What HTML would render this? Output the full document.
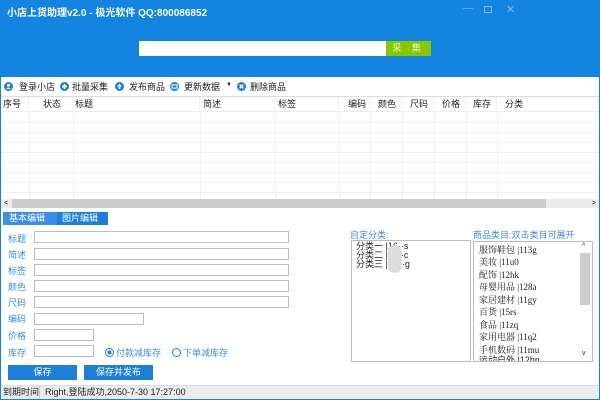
<html><head><style>
*{margin:0;padding:0;box-sizing:border-box}
body{width:600px;height:400px;position:relative;overflow:hidden;background:#fff;font-family:"Liberation Sans","Noto Sans CJK SC",sans-serif;font-size:9px;color:#222}
.a{position:absolute}
.in{position:absolute;border:1px solid #bdbdbd;background:#fff}
.lb{position:absolute;left:8px;color:#3a8ee6;font-size:9px}
.th{position:absolute;top:97px;height:14px;line-height:14px;font-size:9px;border-right:1px solid #eef2f8}
.vl{position:absolute;top:111px;height:88px;width:1px;background:#f0f0f0}
.hl{position:absolute;left:0;width:600px;height:1px;background:#f0f0f0}
.ic{position:absolute;top:82px;width:9px;height:9px}
.tb{position:absolute;top:80px;font-size:9px;color:#222}
.li{position:absolute;left:479px;font-family:"Liberation Serif","Noto Serif CJK SC",serif;font-size:9px;color:#222;white-space:nowrap}
</style></head><body>
<div class="a" style="left:0;top:0;width:600px;height:77px;background:#1384e0"></div>
<div class="a" style="left:7px;top:4px;color:#fff;font-weight:bold;font-size:10px">小店上货助理v2.0 - 极光软件 QQ:800086852</div>
<div class="a" style="left:463px;top:3px;color:#7fb8ee;font-size:10px">—</div>
<div class="a" style="left:484px;top:6px;width:8px;height:7px;border:1px solid #7fb8ee"></div>
<div class="a" style="left:506px;top:3px;color:#7fb8ee;font-size:11px">✕</div>
<div class="a" style="left:139px;top:41px;width:247px;height:15px;background:#fff"></div>
<div class="a" style="left:386px;top:41px;width:45px;height:15px;background:#88c800;color:#e8ffd0;text-align:center;line-height:15px;letter-spacing:4px">采 集</div>
<svg class="ic" style="left:4px" viewBox="0 0 11 11"><circle cx="5.5" cy="5.5" r="5.5" fill="#1e7fd8"/><circle cx="5.5" cy="4" r="1.8" fill="#fff"/><path d="M2.5 8.5Q5.5 5 8.5 8.5Z" fill="#fff"/></svg>
<div class="tb" style="left:19px">登录小店</div>
<svg class="ic" style="left:60px" viewBox="0 0 11 11"><circle cx="5.5" cy="5.5" r="5.5" fill="#1e7fd8"/><path d="M5.5 2.5V8.5M2.5 5.5H8.5" stroke="#fff" stroke-width="2"/></svg>
<div class="tb" style="left:72px">批量采集</div>
<svg class="ic" style="left:115px" viewBox="0 0 11 11"><circle cx="5.5" cy="5.5" r="5.5" fill="#1e7fd8"/><path d="M5.5 2L2.5 5.5H4.5V8.5H6.5V5.5H8.5Z" fill="#fff"/></svg>
<div class="tb" style="left:129px">发布商品</div>
<svg class="ic" style="left:170px" viewBox="0 0 11 11"><circle cx="5.5" cy="5.5" r="5.5" fill="#1e7fd8"/><rect x="2.5" y="3.5" width="6" height="4" fill="none" stroke="#fff" stroke-width="1.3"/></svg>
<div class="tb" style="left:184px">更新数据</div>
<div class="a" style="left:226px;top:82px;font-size:6px">▼</div>
<svg class="ic" style="left:237px" viewBox="0 0 11 11"><circle cx="5.5" cy="5.5" r="5.5" fill="#1e7fd8"/><path d="M3.3 3.3L7.7 7.7M7.7 3.3L3.3 7.7" stroke="#fff" stroke-width="1.8"/></svg>
<div class="tb" style="left:250px">删除商品</div>
<div class="a" style="left:0;top:96px;width:600px;height:1px;background:#ddd"></div>
<div class="th" style="left:0;width:29px;padding-left:3px">序号</div>
<div class="th" style="left:29px;width:44px;padding-left:14px">状态</div>
<div class="th" style="left:73px;width:127px;padding-left:2px">标题</div>
<div class="th" style="left:200px;width:75px;padding-left:3px">简述</div>
<div class="th" style="left:275px;width:64px;padding-left:3px">标签</div>
<div class="th" style="left:339px;width:31px;padding-left:9px">编码</div>
<div class="th" style="left:370px;width:32px;padding-left:8px">颜色</div>
<div class="th" style="left:402px;width:32px;padding-left:8px">尺码</div>
<div class="th" style="left:434px;width:32px;padding-left:8px">价格</div>
<div class="th" style="left:466px;width:31px;padding-left:7px">库存</div>
<div class="th" style="left:497px;width:103px;padding-left:8px;border:0">分类</div>
<div class="hl" style="top:111px;background:#e8eef6"></div>
<div class="hl" style="top:122px"></div><div class="hl" style="top:132px"></div><div class="hl" style="top:142px"></div><div class="hl" style="top:152px"></div><div class="hl" style="top:162px"></div><div class="hl" style="top:172px"></div><div class="hl" style="top:182px"></div><div class="hl" style="top:192px"></div>
<div class="vl" style="left:29px"></div><div class="vl" style="left:73px"></div><div class="vl" style="left:200px"></div><div class="vl" style="left:275px"></div><div class="vl" style="left:339px"></div><div class="vl" style="left:370px"></div><div class="vl" style="left:402px"></div><div class="vl" style="left:434px"></div><div class="vl" style="left:466px"></div><div class="vl" style="left:497px"></div>
<div class="a" style="left:0;top:199px;width:600px;height:9px;background:#cdcdcd"></div>
<div class="a" style="left:0;top:199px;width:12px;height:9px;background:#ececec;font-size:7px;line-height:9px;text-align:center">&lt;</div>
<div class="a" style="left:546px;top:199px;width:54px;height:9px;background:#ececec;font-size:7px;line-height:9px;text-align:right;padding-right:4px">&gt;</div>
<div class="a" style="left:3px;top:212px;width:54px;height:13px;background:#3a8ee6;color:#fff;line-height:13px;padding-left:6px">基本编辑</div>
<div class="a" style="left:57px;top:212px;width:51px;height:13px;background:#1e7fd8;color:#fff;line-height:13px;padding-left:5px">图片编辑</div>
<div class="lb" style="top:232px">标题</div><div class="in" style="left:34px;top:231px;width:255px;height:12px"></div>
<div class="lb" style="top:248px">简述</div><div class="in" style="left:34px;top:248px;width:255px;height:12px"></div>
<div class="lb" style="top:264px">标签</div><div class="in" style="left:34px;top:264px;width:255px;height:12px"></div>
<div class="lb" style="top:280px">颜色</div><div class="in" style="left:34px;top:280px;width:255px;height:12px"></div>
<div class="lb" style="top:296px">尺码</div><div class="in" style="left:34px;top:296px;width:255px;height:12px"></div>
<div class="lb" style="top:312px">编码</div><div class="in" style="left:34px;top:313px;width:110px;height:12px"></div>
<div class="lb" style="top:329px">价格</div><div class="in" style="left:34px;top:329px;width:60px;height:12px"></div>
<div class="lb" style="top:346px">库存</div><div class="in" style="left:34px;top:345px;width:60px;height:12px"></div>
<div class="a" style="left:105px;top:348px;width:9px;height:9px;border-radius:50%;border:1px solid #1e7fd8;background:radial-gradient(#1e7fd8 40%,#fff 45%)"></div>
<div class="a" style="left:116px;top:346px;color:#3a8ee6">付款减库存</div>
<div class="a" style="left:172px;top:348px;width:9px;height:9px;border-radius:50%;border:1px solid #1e7fd8"></div>
<div class="a" style="left:183px;top:346px;color:#3a8ee6">下单减库存</div>
<div class="a" style="left:8px;top:365px;width:69px;height:15px;background:#1e7fd8;color:#fff;text-align:center;line-height:15px">保存</div>
<div class="a" style="left:84px;top:365px;width:69px;height:15px;background:#1e7fd8;color:#fff;text-align:center;line-height:15px">保存并发布</div>
<div class="a" style="left:350px;top:228px;color:#3a8ee6">自定分类:</div>
<div class="a" style="left:473px;top:228px;color:#3a8ee6">商品类目:双击类目可展开</div>
<div class="in" style="left:351px;top:240px;width:120px;height:122px"></div>
<div class="a" style="left:356px;top:242px;line-height:9px;font-size:9px;white-space:nowrap">分类一 |16··s<br>分类二 |16··c<br>分类三 |1····g</div>
<div class="a" style="left:388px;top:245px;width:14px;height:28px;border-radius:7px;background:#ddd"></div>
<div class="in" style="left:473px;top:241px;width:120px;height:121px"></div>
<div class="a" style="left:580px;top:253px;width:10px;height:52px;background:#cdcdcd"></div>
<div class="a" style="left:582px;top:243px;font-size:7px">^</div>
<div class="a" style="left:582px;top:350px;font-size:7px">v</div>
<div class="li" style="top:243px">服饰鞋包 |113g</div>
<div class="li" style="top:255px">美妆 |11u0</div>
<div class="li" style="top:268px">配饰 |12hk</div>
<div class="li" style="top:280px">母婴用品 |128a</div>
<div class="li" style="top:293px">家居建材 |11gy</div>
<div class="li" style="top:305px">百货 |15rs</div>
<div class="li" style="top:318px">食品 |11zq</div>
<div class="li" style="top:330px">家用电器 |11q2</div>
<div class="li" style="top:343px">手机数码 |11mu</div>
<div class="a" style="left:479px;top:355px;width:60px;height:6px;overflow:hidden;font-size:9px;line-height:11px;white-space:nowrap">运动户外 |12hm</div>
<div class="a" style="left:0;top:385px;width:600px;height:15px;background:#ececec;border-top:1px solid #ddd"></div>
<div class="a" style="left:0;top:386px;width:40px;height:13px;border-right:1px solid #ccc;line-height:13px;padding-left:3px">到期时间</div>
<div class="a" style="left:45px;top:386px;line-height:13px">Right,登陆成功,2050-7-30 17:27:00</div>
<div class="a" style="left:0;top:399px;width:600px;height:1px;background:#1384e0"></div>
<div class="a" style="left:599px;top:77px;width:1px;height:323px;background:#1384e0"></div>
<div class="a" style="left:0;top:77px;width:1px;height:323px;background:#1384e0"></div>
</body></html>
